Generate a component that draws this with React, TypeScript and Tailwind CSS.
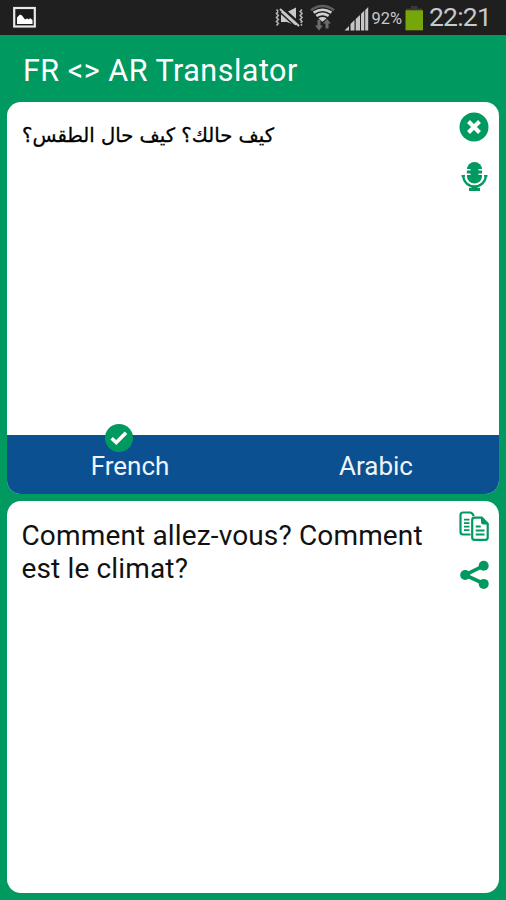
import React, { useState } from "react";

const StatusBar = () => {
  return (
    <div className="flex h-[35px] justify-between bg-[#1f1f1f] pl-[13px] pr-[15px]">
      <svg className="mt-[6px]" width="23" height="22" viewBox="0 0 23 22">
        <rect x="1.2" y="2" width="20.6" height="18.5" fill="#1a1a1a" stroke="#e8e8e6" strokeWidth="2.2" />
        <path d="M4 18V11.500l3-3 2 1 3 4 2-1 2 1 1-1.500 2.500 2V18z" fill="#fff" />
      </svg>
      <div className="flex">
        <svg width="158" height="35" viewBox="266 0 158 35">
          {/* muted */}
          <path
            d="M276.5 9.5l1.8 2-1.8 2 1.8 2-1.8 2 1.8 2-1.8 2 1.8 2-1.8 2M302 9.5l-1.8 2 1.8 2-1.8 2 1.8 2-1.8 2 1.8 2-1.8 2 1.8 2"
            fill="none"
            stroke="#b4b4b4"
            strokeWidth="1.6"
          />
          <path d="M281 12h6l9-4.500v18l-9-3.500H281z" fill="#c8c8c8" />
          <path d="M280.500 6.500l20 18" stroke="#1f1f1f" strokeWidth="2.600" />
          <path d="M278.500 11l18 16.500" stroke="#1f1f1f" strokeWidth="1.500" />
          <path d="M280 9l19 17" stroke="#c8c8c8" strokeWidth="2" />
          {/* wifi */}
          <path d="M311 10.200q11.500-8.400 23 0" fill="none" stroke="#5e5e5e" strokeWidth="2.600" />
          <g fill="none" stroke="#d0d0d0" strokeWidth="2.600">
            <path d="M313.600 12.600q9-5.600 17.800 0" />
            <path d="M316.300 15.900q6.200-4 12.400 0" />
          </g>
          <path d="M318.300 18.200q4.200-2.400 8.400 0l-4.200 3.600z" fill="#d0d0d0" />
          <path
            d="M317.500 19.800h3v5.700h2.500l-4 5-4-5h2.500zM325.500 28.500v-5h-2.500l4-4.500 4 4.500h-2.500v5z"
            fill="#6d6d6d"
          />
          {/* signal */}
          <path
            d="M344.500 30.500l4.500-4.500v4.500zM350.500 30.500v-6.500l4-4v10.500zM355.700 30.500v-11.500l4.300-4v15.500zM361 30.500v-16.500l3.300-3.500v20zM365.200 30.500v-20.500l3-3v23.500z"
            fill="#c6c6c6"
          />
          <text x="371.500" y="24.300" fontFamily="Roboto, sans-serif" fontSize="17" fill="#c8c8c8" textLength="30.500" lengthAdjust="spacingAndGlyphs">
            92%
          </text>
          {/* battery */}
          <path d="M411 6h6.500v2.500h4.500v3.500h-16V8.500h5z" fill="#3a3a3a" />
          <rect x="405.500" y="10.300" width="17.500" height="20" fill="#77a60a" />
        </svg>
        <p className="ml-[5px] w-[62px] font-[Roboto,sans-serif] text-[26.5px] leading-[34px] tracking-[-0.8px] text-[#c9c9c9]">
          22:21
        </p>
      </div>
    </div>
  );
};

const CloseIcon = () => (
  <svg width="30" height="30" viewBox="0 0 30 30">
    <circle cx="15" cy="15" r="14.500" fill="#00995f" />
    <path d="M9.500 9.500l11 11M20.500 9.500l-11 11" stroke="#fff" strokeWidth="4.100" />
  </svg>
);

const MicIcon = () => (
  <svg width="30" height="32" viewBox="459 161 30 32" fill="#00995f">
    <path d="M466.900 169.500a7.600 7.600 0 0 1 15.200 0v6.500a7.600 7.600 0 0 1-15.200 0z" />
    <path d="M466 169.700h4.500M478.500 169.700h4.500M466 174.300h4.500M478.500 174.300h4.500" stroke="#fff" strokeWidth="1.500" />
    <path d="M463.200 175.500c0 6.500 5 10.800 11.300 10.800s11.300-4.300 11.300-10.800" fill="none" stroke="#00995f" strokeWidth="2.200" />
    <path d="M461.500 175h3.500v1.800h-3.500zM484 175h3.500v1.800h-3.500zM471.500 186h6v1.700h2.500v3.300h-11v-3.300h2.500z" />
  </svg>
);

const CopyIcon = () => (
  <svg width="30" height="30" viewBox="459 511 30 30" fill="none" stroke="#00995f" strokeWidth="2.200">
    <path d="M470.500 534.500H463a2.500 2.500 0 0 1-2.500-2.500V515a2.500 2.500 0 0 1 2.500-2.500h7.500q2 .5 3.300 3.500" />
    <path d="M464 519.700h5.500M464 523.200h5.500M464 526.700h5.500M464 530.200h5.500" strokeWidth="1.800" />
    <path d="M474.500 517.700h7.200l6 6V537.500a2.300 2.300 0 0 1-2.300 2.300H474.500a2.300 2.300 0 0 1-2.300-2.300V520a2.300 2.300 0 0 1 2.300-2.300z" fill="#fff" />
    <path d="M481 517.500l7 7h-4.500a2.500 2.500 0 0 1-2.500-2.500z" fill="#00995f" stroke="none" />
    <path d="M475.700 526.500h5M475.700 530.500h8.800M475.700 534.500h8.800" strokeWidth="1.900" />
  </svg>
);

const ShareIcon = () => (
  <svg width="30" height="30" viewBox="459 560 30 30" fill="#00995f">
    <path d="M483.500 565.800L465 575l18.500 8.500" fill="none" stroke="#00995f" strokeWidth="3.600" />
    <circle cx="465.200" cy="575" r="5" />
    <circle cx="483.700" cy="565.800" r="5" />
    <circle cx="483.700" cy="583.900" r="5" />
  </svg>
);

const CheckIcon = () => (
  <svg width="28" height="28" viewBox="0 0 28 28">
    <circle cx="14" cy="14" r="14" fill="#00995f" />
    <path d="M6.600 14.200l4.700 4.400 9.700-9.800" fill="none" stroke="#fff" strokeWidth="3.600" />
  </svg>
);

const App = () => {
  const [language, setLanguage] = useState("French");

  return (
    <div className="flex h-[900px] w-[506px] flex-col bg-[#00995f] font-[Roboto,sans-serif]">
      <StatusBar />
      <h1 className="h-[67px] pl-[23px] text-[30.5px] leading-[71px] tracking-[0.5px] text-white">
        FR &lt;&gt; AR Translator
      </h1>

      <div className="mx-[7px] flex h-[392px] flex-col overflow-hidden rounded-[14px] bg-white">
        <div className="flex h-[333px] justify-between pl-[15px] pr-[10px]">
          <p
            dir="rtl"
            className="mt-[18px] self-start font-['DejaVu_Sans',sans-serif] text-[19.6px] leading-8 whitespace-nowrap text-black [-webkit-text-stroke:0.3px_black]"
          >
            كيف حالك؟ كيف حال الطقس؟
          </p>
          <div className="flex flex-col gap-[19px] pt-[10px]">
            <button>
              <CloseIcon />
            </button>
            <button>
              <MicIcon />
            </button>
          </div>
        </div>
        <div className="grid h-[59px] grid-cols-2 bg-[#0b5192] text-[26px] leading-[63px] text-[#f0f4fa]">
          <button className="relative" onClick={() => setLanguage("French")}>
            French
            {language === "French" && (
              <span className="absolute -top-[11px] left-[98px]">
                <CheckIcon />
              </span>
            )}
          </button>
          <button className="relative" onClick={() => setLanguage("Arabic")}>
            Arabic
            {language === "Arabic" && (
              <span className="absolute -top-[11px] left-[98px]">
                <CheckIcon />
              </span>
            )}
          </button>
        </div>
      </div>

      <div className="mx-[7px] mt-[7px] flex h-[392px] justify-between rounded-[14px] bg-white pl-[14.5px] pr-[10px]">
        <p className="w-[415px] pt-[18px] text-[28px] leading-[33px] tracking-[0.15px] text-[#111]">
          Comment allez-vous? Comment est le climat?
        </p>
        <div className="flex flex-col gap-[19px] pt-[10px]">
          <button>
            <CopyIcon />
          </button>
          <button>
            <ShareIcon />
          </button>
        </div>
      </div>
    </div>
  );
};

export default App;
